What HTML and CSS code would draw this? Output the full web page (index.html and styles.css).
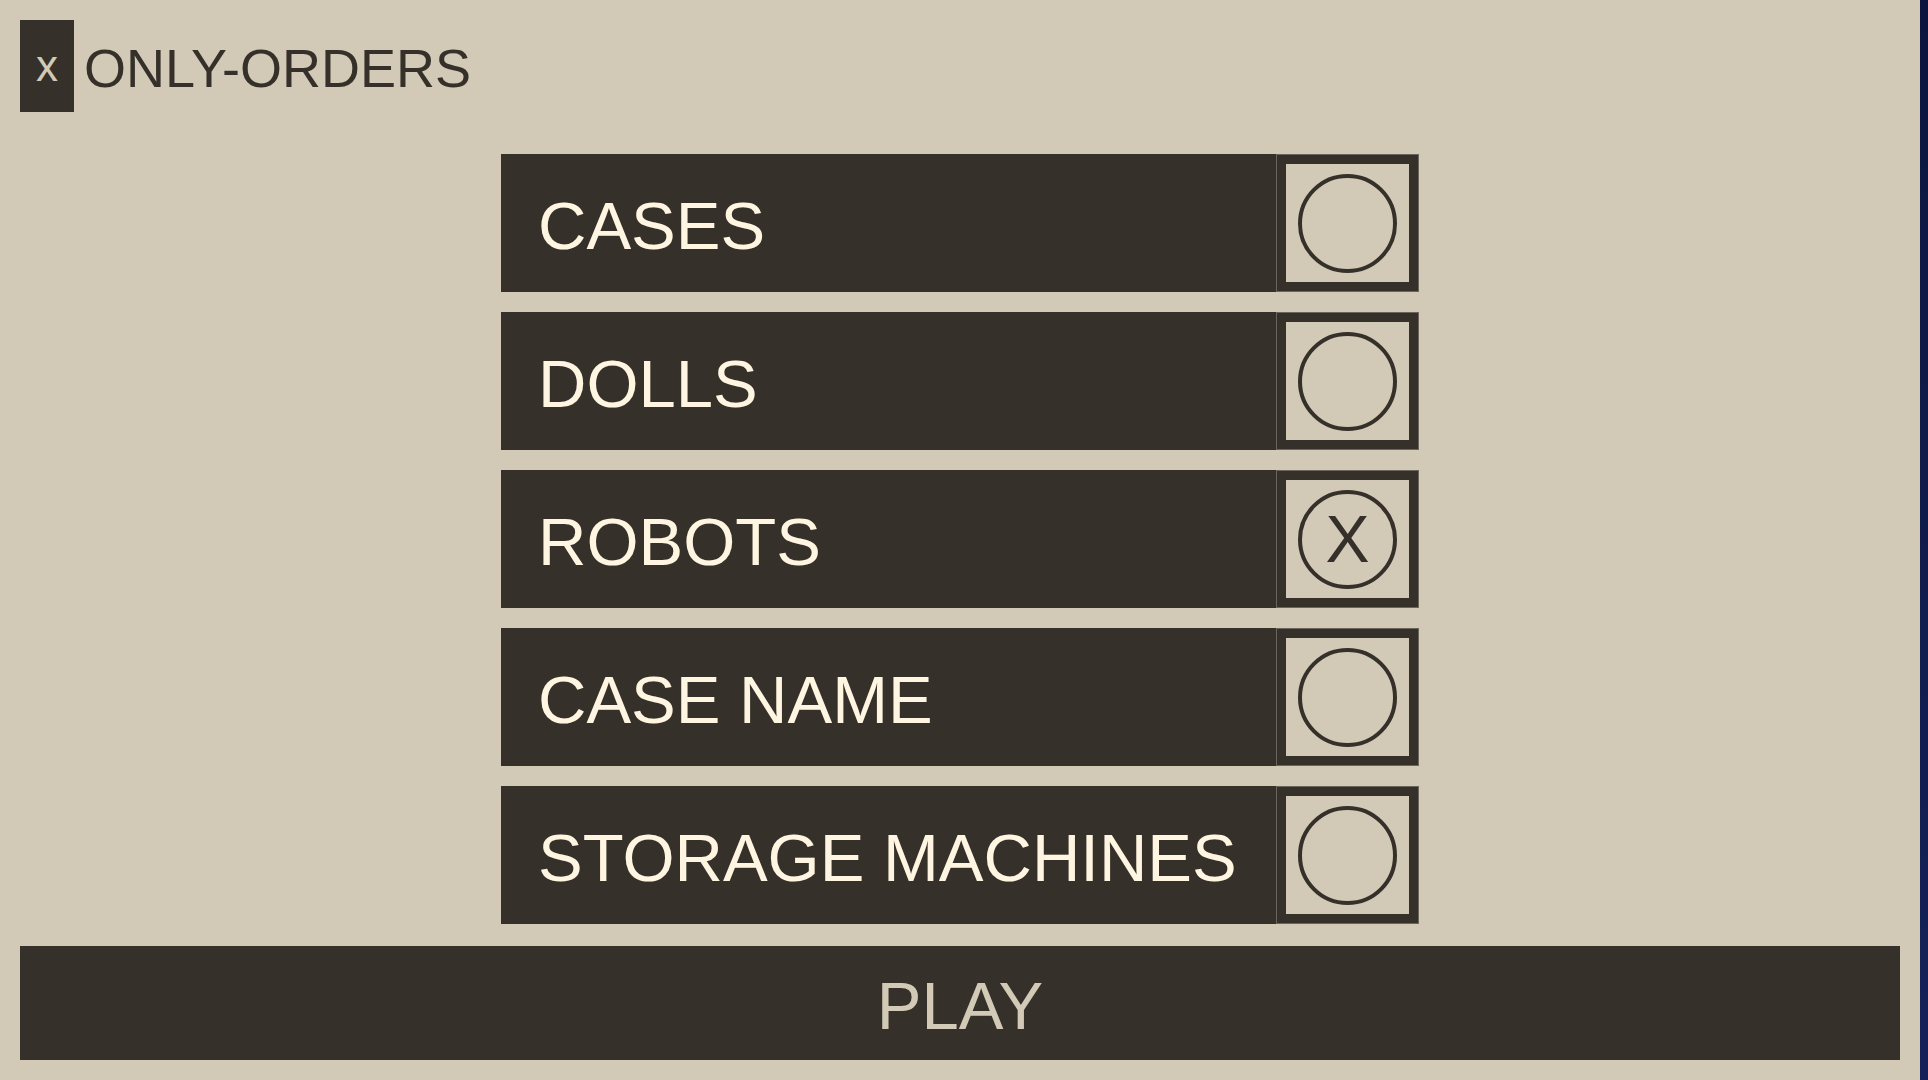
FILE: index.html
```html
<!DOCTYPE html>
<html>
<head>
    <title>Only Orders</title>
    <link rel="stylesheet" href="styles.css">
</head>
<body>
    <div class="screen">
        <div class="header">
            <button class="close-btn">x</button>
            <h1 class="title">ONLY-ORDERS</h1>
        </div>

        <div class="options">
            <div class="option">
                <div class="option-label">CASES</div>
                <div class="option-check"><span class="circle"></span></div>
            </div>
            <div class="option">
                <div class="option-label">DOLLS</div>
                <div class="option-check"><span class="circle"></span></div>
            </div>
            <div class="option">
                <div class="option-label">ROBOTS</div>
                <div class="option-check"><span class="circle">X</span></div>
            </div>
            <div class="option">
                <div class="option-label">CASE NAME</div>
                <div class="option-check"><span class="circle"></span></div>
            </div>
            <div class="option">
                <div class="option-label">STORAGE MACHINES</div>
                <div class="option-check"><span class="circle"></span></div>
            </div>
        </div>

        <button class="play-btn">PLAY</button>
    </div>
</body>
</html>
```

FILE: styles.css
```css
html {
    background: linear-gradient(#0b153d, #15225a);
}

body {
    margin: 0;
    font-family: 'Liberation Sans', Arial, sans-serif;
}

.screen {
    width: 1920px;
    height: 1080px;
    box-sizing: border-box;
    padding: 20px;
    background: #d2c9b6;
    color: #35312a;
    display: flex;
    flex-direction: column;
}

.header {
    display: flex;
    align-items: center;
    height: 92px;
}

.close-btn {
    width: 54px;
    height: 92px;
    padding: 0;
    border: none;
    background: #35312a;
    color: #d2c9b6;
    font-family: inherit;
    font-size: 44px;
    line-height: 1;
}

.title {
    margin: 0 0 0 10px;
    padding-top: 3px;
    font-size: 54px;
    font-weight: normal;
    color: #35312a;
}

.options {
    margin-top: 42px;
    display: flex;
    flex-direction: column;
    align-items: center;
    gap: 20px;
}

.option {
    display: flex;
    width: 918px;
    height: 138px;
}

.option-label {
    flex: 1;
    display: flex;
    align-items: center;
    padding-left: 37px;
    padding-top: 4px;
    background: #35312a;
    color: #fff5e1;
    font-size: 67px;
}

.option-check {
    width: 143px;
    box-sizing: border-box;
    border: 1px solid #6b665c;
    outline: 9px solid #35312a;
    outline-offset: -10px;
    background: #d2c9b6;
    display: flex;
    align-items: center;
    justify-content: center;
}

.circle {
    width: 99px;
    height: 99px;
    box-sizing: border-box;
    border: 4px solid #35312a;
    border-radius: 50%;
    display: flex;
    align-items: center;
    justify-content: center;
    font-size: 66px;
    line-height: 1;
    color: #35312a;
}

.play-btn {
    margin-top: 22px;
    height: 114px;
    border: none;
    background: #35312a;
    color: #d2c9b6;
    font-family: inherit;
    font-size: 67px;
    padding: 5px 0 0;
}
```
